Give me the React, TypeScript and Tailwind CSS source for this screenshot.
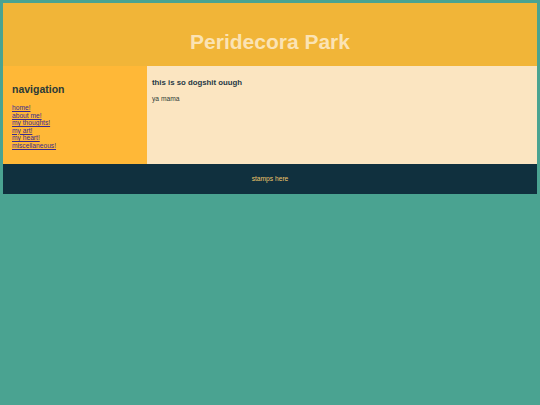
import React from 'react';

const links = ['home!', 'about me!', 'my thoughts!', 'my art!', 'my heart!', 'miscellaneous!'];

const App: React.FC = () => {
  return (
    <div className="min-h-[405px] w-full bg-[#4aa391] p-[3px] font-['Liberation_Sans',Arial,sans-serif]">
      <div className="flex flex-col">
        {/* header */}
        <header className="bg-[#f1b538] pt-[27px] pb-[12px] text-center">
          <h1 className="text-[21px] leading-[24px] font-bold text-[#fbe3b4]">Peridecora Park</h1>
        </header>

        {/* sidebar + content */}
        <div className="flex">
          <nav className="w-[144px] shrink-0 bg-[#ffb837] pl-[9px] pt-[17px] pb-[14px]">
            <h2 className="text-[10.5px] leading-[12px] font-bold text-[#2b3a37] mb-[9px]">navigation</h2>
            <ul className="text-[6.67px] leading-[7.6px]">
              {links.map((l) => (
                <li key={l}>
                  <a href="#" className="text-[#3b2a8e] underline">{l}</a>
                </li>
              ))}
            </ul>
          </nav>

          <main className="flex-1 bg-[#fbe5c1] pl-[5px] pt-[12px]">
            <h3 className="text-[7.8px] leading-[9px] font-bold text-[#1f3945] mb-[8px]">this is so dogshit ouugh</h3>
            <p className="text-[6.67px] leading-[7.6px] text-[#2b3a37]">ya mama</p>
          </main>
        </div>

        {/* footer */}
        <footer className="h-[30px] bg-[#10303e] flex items-center justify-center">
          <span className="text-[6.67px] leading-[7.6px] text-[#efc56a]">stamps here</span>
        </footer>
      </div>
    </div>
  );
};

export default App;
